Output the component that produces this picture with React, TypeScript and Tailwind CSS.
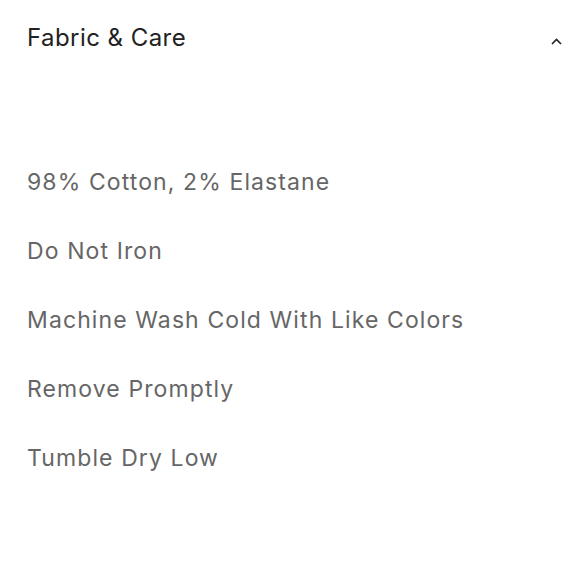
export default function App() {
  const items = [
    "98% Cotton, 2% Elastane",
    "Do Not Iron",
    "Machine Wash Cold With Like Colors",
    "Remove Promptly",
    "Tumble Dry Low",
  ];
  return (
    <div className="w-[580px] h-[579px] bg-white font-['Inter',sans-serif]">
      <div className="flex items-center justify-between pl-[27px] pr-[18px] pt-[24px]">
        <span className="text-[24px] leading-[28px] tracking-[0.45px] text-[#222]">Fabric &amp; Care</span>
        <svg width="11" height="7" viewBox="0 0 11 7" className="mt-[6px]">
          <path d="M1 6 L5.5 1.5 L10 6" fill="none" stroke="#222" strokeWidth="1.6" />
        </svg>
      </div>
      <ul className="pl-[27px] pt-[116px] flex flex-col gap-[41px]">
        {items.map((t) => (
          <li key={t} className="text-[23px] leading-[28px] tracking-[1.1px] text-[#666]">{t}</li>
        ))}
      </ul>
    </div>
  );
}
